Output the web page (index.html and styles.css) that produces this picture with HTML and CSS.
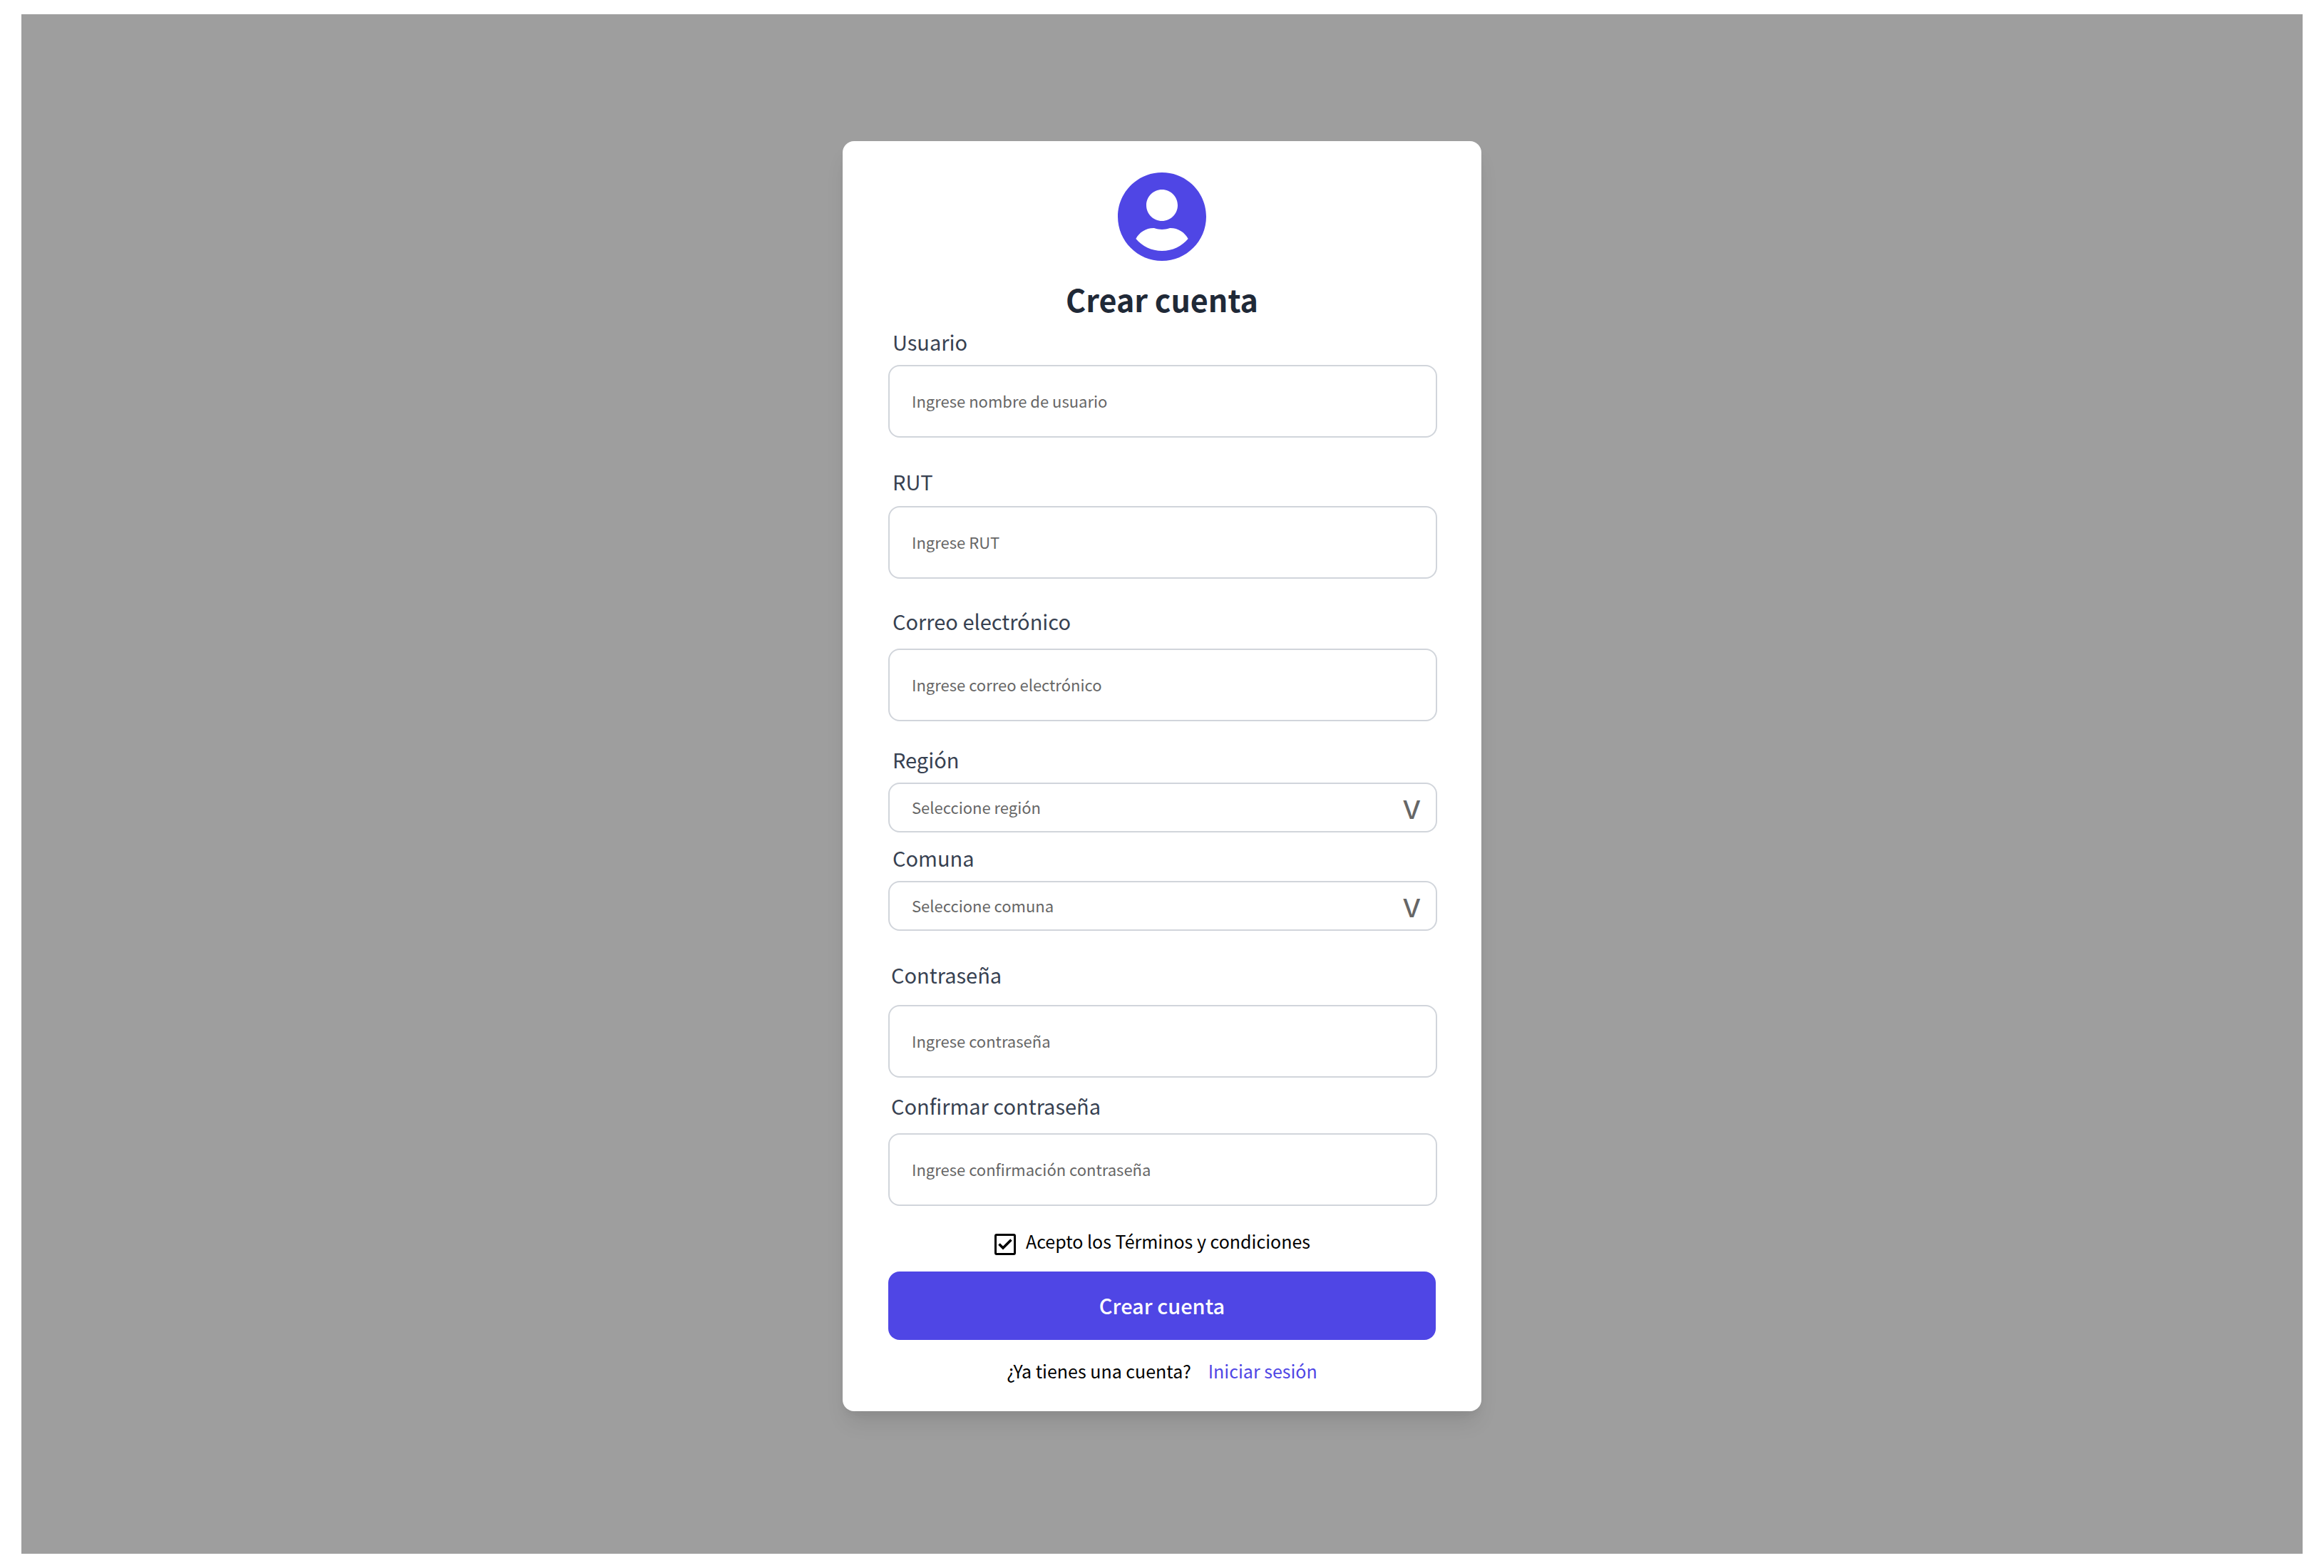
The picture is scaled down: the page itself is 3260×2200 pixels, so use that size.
FILE: index.html
```html
<!DOCTYPE html>
<html lang="es">
<head>
  <meta charset="utf-8">
  <meta name="viewport" content="width=device-width, initial-scale=1">
  <title>Crear cuenta</title>
  <link rel="stylesheet" href="styles.css">
</head>
<body>
  <main class="backdrop">
    <section class="card">
      <svg class="avatar" viewBox="0 0 496 512" aria-hidden="true">
        <path fill="currentColor" d="M248 8C111 8 0 119 0 256s111 248 248 248 248-111 248-248S385 8 248 8zm0 96c48.6 0 88 39.4 88 88s-39.4 88-88 88-88-39.4-88-88 39.4-88 88-88zm0 344c-58.7 0-111.3-26.6-146.5-68.2 18.8-35.4 55.6-59.8 98.5-59.8 2.4 0 4.8.4 7.1 1.1 13 4.2 26.6 6.9 40.9 6.9 14.3 0 28-2.7 40.9-6.9 2.3-.7 4.7-1.1 7.1-1.1 42.9 0 79.7 24.4 98.5 59.8C359.3 421.4 306.7 448 248 448z"/>
      </svg>
      <h1 class="title">Crear cuenta</h1>

      <form class="form">
        <div class="field field--first">
          <label class="label" for="usuario">Usuario</label>
          <input class="control" id="usuario" type="text" placeholder="Ingrese nombre de usuario">
        </div>
        <div class="field field--rut">
          <label class="label" for="rut">RUT</label>
          <input class="control" id="rut" type="text" placeholder="Ingrese RUT">
        </div>
        <div class="field field--email">
          <label class="label" for="correo">Correo electrónico</label>
          <input class="control" id="correo" type="email" placeholder="Ingrese correo electrónico">
        </div>
        <div class="field field--region">
          <label class="label" for="region">Región</label>
          <div class="select">
            <select class="control control--select" id="region">
              <option>Seleccione región</option>
            </select>
            <span class="arrow" aria-hidden="true">V</span>
          </div>
        </div>
        <div class="field field--comuna">
          <label class="label" for="comuna">Comuna</label>
          <div class="select">
            <select class="control control--select" id="comuna">
              <option>Seleccione comuna</option>
            </select>
            <span class="arrow" aria-hidden="true">V</span>
          </div>
        </div>
        <div class="field field--password">
          <label class="label" for="clave">Contraseña</label>
          <input class="control" id="clave" type="password" placeholder="Ingrese contraseña">
        </div>
        <div class="field field--confirm">
          <label class="label" for="confirmar">Confirmar contraseña</label>
          <input class="control" id="confirmar" type="password" placeholder="Ingrese confirmación contraseña">
        </div>

        <div class="terms">
          <span class="check">
            <input class="check-box" id="terminos" type="checkbox" checked>
            <svg class="check-mark" viewBox="0 0 30 30" aria-hidden="true">
              <path d="M6.5 14.5l5.5 5.5L23.5 8.500" fill="none" stroke="currentColor" stroke-width="3.6"/>
            </svg>
          </span>
          <label for="terminos">Acepto los Términos y condiciones</label>
        </div>

        <button class="submit" type="submit">Crear cuenta</button>
      </form>

      <p class="login">
        <span>¿Ya tienes una cuenta?</span>
        <a class="login-link" href="#">Iniciar sesión</a>
      </p>
    </section>
  </main>
</body>
</html>
```

FILE: styles.css
```css
* {
  box-sizing: border-box;
}

body {
  margin: 0;
  padding: 20px 30px;
  background: #fff;
  color: #000;
  font-family: "Noto Sans CJK JP", "Noto Sans", sans-serif;
}

.backdrop {
  display: flex;
  justify-content: center;
  align-items: flex-start;
  min-height: calc(100vh - 40px);
  padding: 178px 24px;
  background: #9e9e9e;
}

.card {
  width: 100%;
  max-width: 896px;
  padding: 42px 64px 37px;
  border-radius: 16px;
  background: #fff;
  box-shadow: 0 20px 30px -6px rgba(0, 0, 0, 0.1), 0 8px 12px -4px rgba(0, 0, 0, 0.05);
}

.avatar {
  display: block;
  width: 124px;
  height: 128px;
  margin: 0 auto;
  color: #4f46e5;
}

.title {
  margin: 21px 0 0;
  color: #1f2937;
  font-size: 43px;
  font-weight: 700;
  line-height: 60px;
  text-align: center;
}

.form {
  display: flex;
  flex-direction: column;
}

.field {
  display: flex;
  flex-direction: column;
  gap: 14px;
  margin-right: -2px;
}

.field--first { margin-top: 11px; }
.field--rut { margin-top: 42px; gap: 16px; }
.field--email { margin-top: 40px; gap: 20px; }
.field--region { margin-top: 34px; }
.field--comuna { margin-top: 16px; }
.field--password { margin-top: 42px; gap: 24px; }
.field--confirm { margin-top: 20px; gap: 20px; }

.label {
  padding-left: 6px;
  color: #374151;
  font-size: 29px;
  line-height: 38px;
}

.field--password .label,
.field--confirm .label {
  padding-left: 4px;
}

.control {
  width: 100%;
  height: 102px;
  padding: 0 31px 2px;
  border: 2px solid #d1d5db;
  border-radius: 16px;
  background: #fff;
  color: #666;
  font-family: inherit;
  font-size: 22px;
}

.control::placeholder {
  color: #666;
  opacity: 1;
}

.select {
  display: grid;
  align-items: center;
}

.select > * {
  grid-area: 1 / 1;
}

.control--select {
  height: 70px;
  appearance: none;
}

.arrow {
  justify-self: end;
  padding: 5px 23px 0 0;
  color: #666;
  font-family: Inter, sans-serif;
  font-size: 36px;
  font-weight: 500;
  line-height: 40px;
  pointer-events: none;
}

.terms {
  display: flex;
  justify-content: center;
  align-items: flex-end;
  gap: 14px;
  margin-top: 29px;
  padding-right: 27px;
  font-size: 25px;
  line-height: 40px;
}

.check {
  display: grid;
}

.check > * {
  grid-area: 1 / 1;
  width: 30px;
  height: 30px;
}

.check-box {
  margin: 0;
  border: 3px solid #000;
  border-radius: 3px;
  appearance: none;
}

.check-mark {
  visibility: hidden;
  pointer-events: none;
}

.check-box:checked + .check-mark {
  visibility: visible;
}

.submit {
  height: 96px;
  margin-top: 23px;
  padding: 0 0 2px;
  border: 0;
  border-radius: 16px;
  background: #4f46e5;
  color: #fff;
  font-family: inherit;
  font-size: 29px;
  font-weight: 500;
}

.login {
  display: flex;
  justify-content: center;
  gap: 24px;
  margin: 23px 0 0;
  font-size: 25px;
  line-height: 40px;
}

.login-link {
  color: #4f46e5;
  text-decoration: none;
}
```
